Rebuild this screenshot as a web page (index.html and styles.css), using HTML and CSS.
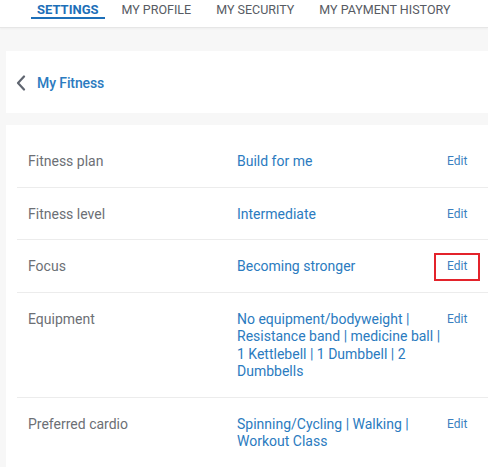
FILE: index.html
```html
<!DOCTYPE html>
<html>
<head>
<meta charset="utf-8">
<link rel="stylesheet" href="styles.css">
</head>
<body>
<nav class="tabs">
  <a class="tab active">SETTINGS</a>
  <a class="tab">MY PROFILE</a>
  <a class="tab">MY SECURITY</a>
  <a class="tab">MY PAYMENT HISTORY</a>
</nav>
<main class="content">
  <section class="card header-card">
    <svg class="chevron" width="10" height="16" viewBox="0 0 10 16"><path d="M8 1.5 L2 8 L8 14.5" fill="none" stroke="#5f6570" stroke-width="2.2" stroke-linecap="round" stroke-linejoin="round"/></svg>
    <span class="header-title">My Fitness</span>
  </section>
  <section class="card list-card">
    <div class="row">
      <div class="label">Fitness plan</div>
      <div class="value">Build for me</div>
      <a class="edit">Edit</a>
    </div>
    <div class="row">
      <div class="label">Fitness level</div>
      <div class="value">Intermediate</div>
      <a class="edit">Edit</a>
    </div>
    <div class="row">
      <div class="label">Focus</div>
      <div class="value">Becoming stronger</div>
      <a class="edit highlighted">Edit</a>
    </div>
    <div class="row">
      <div class="label">Equipment</div>
      <div class="value">No equipment/bodyweight | Resistance band | medicine ball | 1 Kettlebell | 1 Dumbbell | 2 Dumbbells</div>
      <a class="edit">Edit</a>
    </div>
    <div class="row">
      <div class="label">Preferred cardio</div>
      <div class="value">Spinning/Cycling | Walking | Workout Class</div>
      <a class="edit">Edit</a>
    </div>
  </section>
</main>
</body>
</html>
```

FILE: styles.css
```css
* { box-sizing: border-box; }
html, body {
  margin: 0;
  padding: 0;
  background: #f7f7f7;
  font-family: Roboto, "Liberation Sans", Arial, sans-serif;
  overflow: hidden;
}
.tabs {
  height: 28px;
  background: #fff;
  border-bottom: 1px solid #e6e6e6;
  box-shadow: 0 1px 2px rgba(0,0,0,0.04);
  display: flex;
  padding-left: 31px;
  gap: 13px;
}
.tab {
  font-size: 12.5px;
  line-height: 17px;
  padding: 1px 6px 0;
  height: 19px;
  color: #575b63;
  border-bottom: 2px solid transparent;
}
.tab.active {
  font-size: 13px;
  font-weight: 700;
  color: #1d6fb8;
  border-bottom-color: #1d6fb8;
  margin-right: -2px;
}
.content {
  padding: 23px 0 0 6px;
}
.card {
  background: #fff;
}
.header-card {
  height: 62px;
  display: flex;
  align-items: center;
  padding: 1px 0 0 10px;
  gap: 11px;
  margin-bottom: 12px;
}
.chevron { display: block; }
.header-title {
  font-size: 14px;
  color: #2b7bc0;
  font-weight: 500;
  letter-spacing: -0.1px;
}
.list-card {
  padding: 10px 0 20px 11px;
}
.row {
  display: grid;
  grid-template-columns: 209px 208px auto;
  padding: 18px 0 16px 11px;
  border-bottom: 1px solid #ececec;
  font-size: 14px;
  line-height: 17.5px;
}
.row:last-child { border-bottom: none; }
.label { color: #6c6f75; }
.value { color: #2b7bc0; }
.edit {
  font-size: 12px;
  color: #3a7fc0;
  padding: 3px 11px;
  margin: -5px 0 -5px -11px;
  border: 2px solid transparent;
  align-self: start;
  justify-self: start;
  line-height: 17.5px;
}
.edit.highlighted { border-color: #e3232b; }
```
